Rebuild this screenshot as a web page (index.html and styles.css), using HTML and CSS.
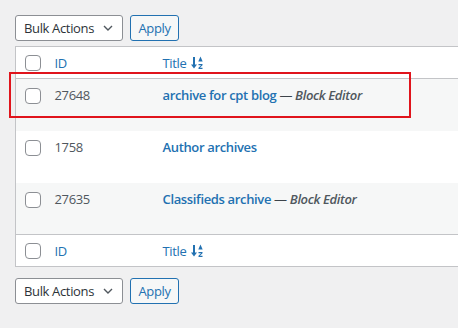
FILE: index.html
```html
<!DOCTYPE html>
<html lang="en">
<head>
  <meta charset="UTF-8" />
  <title>Templates</title>
  <link rel="stylesheet" href="styles.css">
</head>
<body>
  <div class="wrap">
    <div class="tablenav">
      <div class="select">Bulk Actions
        <svg class="chev" viewBox="0 0 10 6" width="10" height="6"><path d="M1 1l4 4 4-4" fill="none" stroke="#50575e" stroke-width="1.4"/></svg>
      </div>
      <button class="apply">Apply</button>
    </div>

    <table class="list">
      <thead>
        <tr>
          <td class="check"><span class="box"></span></td>
          <th class="col-id">ID</th>
          <th class="col-title">Title
            <svg class="sort" viewBox="0 0 12 14" width="12" height="14">
              <path d="M3 1v9" stroke="#2271b1" stroke-width="2"/>
              <path d="M0 8.5l3 4 3-4z" fill="#2271b1"/>
              <path d="M9.5 0.5l2.2 5h-4.4z" fill="#2271b1"/>
              <path d="M7.5 8h4v1.2l-2.6 2.6h2.6v1.2h-4v-1.2l2.6-2.6h-2.6z" fill="#2271b1"/>
            </svg>
          </th>
        </tr>
      </thead>
      <tbody>
        <tr class="alt">
          <td class="check"><span class="box"></span></td>
          <td class="col-id">27648</td>
          <td class="col-title"><a href="#">archive for cpt blog</a> — <span class="state">Block Editor</span></td>
        </tr>
        <tr>
          <td class="check"><span class="box"></span></td>
          <td class="col-id">1758</td>
          <td class="col-title"><a href="#">Author archives</a></td>
        </tr>
        <tr class="alt">
          <td class="check"><span class="box"></span></td>
          <td class="col-id">27635</td>
          <td class="col-title"><a href="#">Classifieds archive</a> — <span class="state">Block Editor</span></td>
        </tr>
      </tbody>
      <tfoot>
        <tr>
          <td class="check"><span class="box"></span></td>
          <th class="col-id">ID</th>
          <th class="col-title">Title
            <svg class="sort" viewBox="0 0 12 14" width="12" height="14">
              <path d="M3 1v9" stroke="#2271b1" stroke-width="2"/>
              <path d="M0 8.5l3 4 3-4z" fill="#2271b1"/>
              <path d="M9.5 0.5l2.2 5h-4.4z" fill="#2271b1"/>
              <path d="M7.5 8h4v1.2l-2.6 2.6h2.6v1.2h-4v-1.2l2.6-2.6h-2.6z" fill="#2271b1"/>
            </svg>
          </th>
        </tr>
      </tfoot>
    </table>

    <div class="tablenav bottom">
      <div class="select">Bulk Actions
        <svg class="chev" viewBox="0 0 10 6" width="10" height="6"><path d="M1 1l4 4 4-4" fill="none" stroke="#50575e" stroke-width="1.4"/></svg>
      </div>
      <button class="apply">Apply</button>
    </div>

    <div class="highlight"></div>
  </div>
</body>
</html>
```

FILE: styles.css
```css
:root {
  --bg: #f0f0f1;
  --border: #c3c4c7;
  --link: #2271b1;
  --text: #3c434a;
  --stripe: #f6f7f7;
}
* { box-sizing: border-box; }
html, body { margin: 0; padding: 0; }
body {
  background: var(--bg); color: var(--text);
  font-family: "Open Sans", "Noto Sans", sans-serif; font-size: 13px;
  letter-spacing: -0.35px;
  overflow: hidden; width: 458px; height: 328px;
}
.wrap { position: relative; padding: 15px 0 0 15px; width: 560px; }

.tablenav { display: flex; gap: 7px; height: 26px; }
.tablenav.bottom { margin-top: 11px; }
.select {
  width: 108px; height: 26px; padding: 0 8px;
  display: flex; align-items: center; justify-content: space-between;
  background: #fff; border: 1px solid #8c8f94; border-radius: 3px;
  color: #2c3338;
}
.chev { margin-right: 1px; }
.apply {
  width: 49px; height: 26px; padding: 0;
  background: var(--stripe); color: var(--link);
  border: 1px solid var(--link); border-radius: 3px;
  font-family: inherit; font-size: 13px; letter-spacing: -0.35px;
}

.list {
  margin-top: 5px; width: 520px;
  border-collapse: collapse; background: #fff;
  border: 1px solid var(--border);
}
.list th, .list td { text-align: left; font-weight: 400; vertical-align: middle; padding: 0; }
.list thead tr { height: 32px; border-bottom: 1px solid var(--border); }
.list tfoot tr { height: 32px; border-top: 1px solid var(--border); }
.list thead th, .list tfoot th { color: var(--link); }
.list tbody tr { height: 52px; }
.list tbody td { vertical-align: top; padding-top: 7px; }
.list tr.alt { background: var(--stripe); }

.check { width: 39px; padding-left: 9px !important; }
.list tbody .check { padding-top: 9px; }
.box {
  display: block; width: 16px; height: 16px;
  border: 1px solid #8c8f94; border-radius: 4px; background: #fff;
}
.col-id { width: 108px; }
.list tbody .col-id { color: #50575e; }
.col-title a { color: var(--link); font-weight: 600; text-decoration: none; }
.state { font-style: italic; font-weight: 600; color: #50575e; }
.sort { vertical-align: -2px; margin-left: 2px; }

.highlight {
  position: absolute; left: 9px; top: 72px;
  width: 402px; height: 46px;
  border: 2px solid #e0141c;
}
```
